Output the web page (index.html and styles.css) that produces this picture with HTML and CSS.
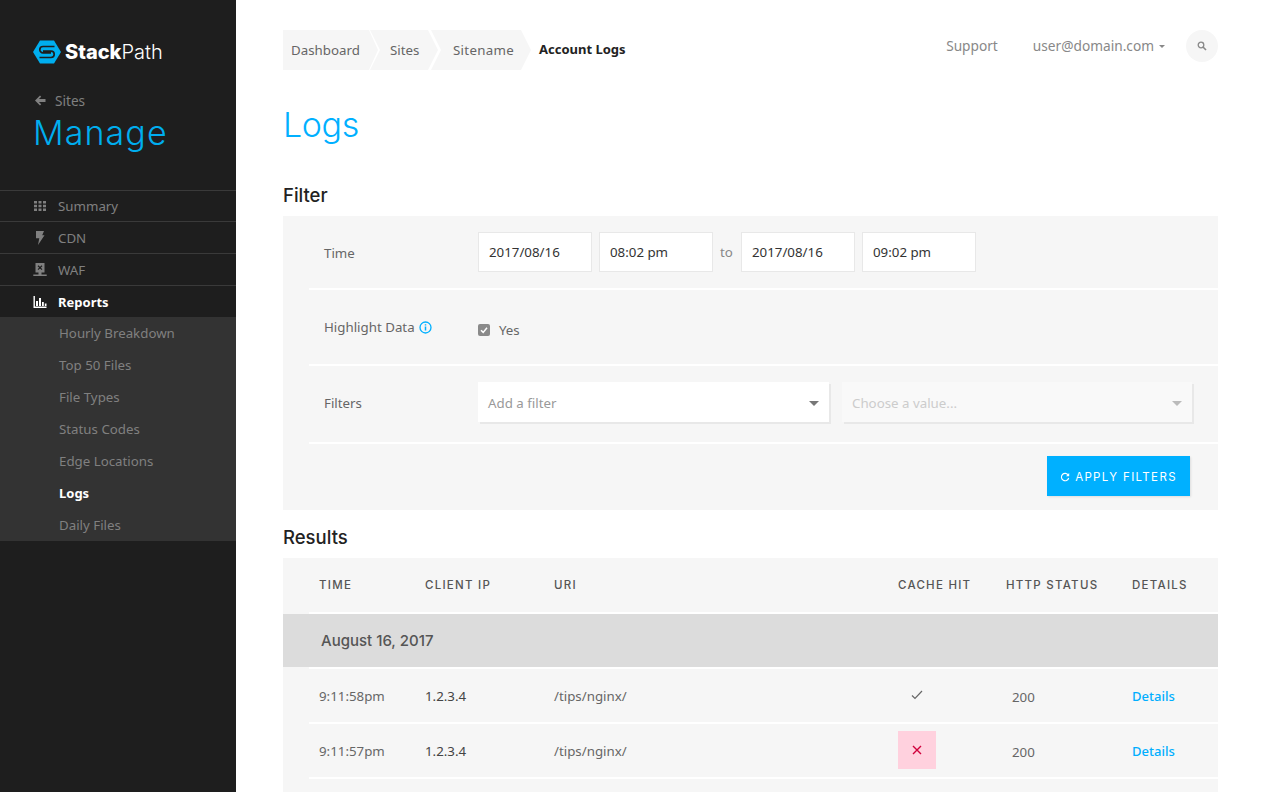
FILE: index.html
```html
<!DOCTYPE html>
<html lang="en">
<head>
<meta charset="utf-8">
<title>Logs</title>
<link rel="stylesheet" href="styles.css">
</head>
<body>
<div class="app">
  <aside class="sidebar">
    <div class="logo">
      <svg class="logo-mark" width="28" height="24" viewBox="0 0 28 24"><path d="M7 0.500H21L28 12L21 23.500H7L0 12Z" fill="#00aeef"/><path d="M21.500 6.500H10a3.200 3.200 0 0 0 0 6.400H18" fill="none" stroke="#1e1e1e" stroke-width="1.700"/><path d="M6.500 17.500H18a3.200 3.200 0 0 0 0-6.400H10" fill="none" stroke="#1e1e1e" stroke-width="1.700"/></svg>
      <span class="logo-text"><b>Stack</b>Path</span>
    </div>
    <a class="back"><svg width="12" height="11" viewBox="0 0 12 11"><path d="M6 0.500L1 5.500l5 5 1.200-1.200-2.300-2.300H11.500V4H4.900l2.300-2.300z" fill="#808080"/></svg><span>Sites</span></a>
    <h2 class="manage">Manage</h2>
    <nav class="nav">
      <a class="nav-item nav-first"><svg class="nav-icon" width="14" height="12" viewBox="0 0 14 12" fill="#808080"><path d="M1 1h3v2.600H1zM5.500 1h3v2.600h-3zM10 1h3v2.600h-3zM1 4.700h3v2.600H1zM5.500 4.700h3v2.600h-3zM10 4.700h3v2.600h-3zM1 8.400h3V11H1zM5.500 8.400h3V11h-3zM10 8.400h3V11h-3z"/></svg>Summary</a>
      <a class="nav-item"><svg class="nav-icon" width="14" height="14" viewBox="0 0 14 14" fill="#808080"><path d="M3 0h8L9.200 4.200h2.300L5 14l1.300-6.800H3z"/></svg>CDN</a>
      <a class="nav-item"><svg class="nav-icon" width="14" height="14" viewBox="0 0 14 14"><path d="M2.500 0h9v9.500h-3v2h5.200V13H.3v-1.500h5.200v-2h-3z" fill="#808080"/><path d="M5 2.800l4 3.800M9 2.800l-4 3.800" stroke="#1e1e1e" stroke-width="1.200"/></svg>WAF</a>
      <a class="nav-item nav-active"><svg class="nav-icon" width="14" height="12" viewBox="0 0 14 12" fill="#fff"><path d="M0.500 0h1.400v10.600H13.500V12H0.500zM3 5h2v5H3zM6 2h2v8H6zM9 6h1.800v4H9zM11.800 7.500h1.700V10h-1.700z"/></svg>Reports</a>
      <div class="subnav">
        <a class="sub-item">Hourly Breakdown</a>
        <a class="sub-item">Top 50 Files</a>
        <a class="sub-item">File Types</a>
        <a class="sub-item">Status Codes</a>
        <a class="sub-item">Edge Locations</a>
        <a class="sub-item sub-active">Logs</a>
        <a class="sub-item">Daily Files</a>
      </div>
    </nav>
  </aside>
  <main class="main">
    <header class="topbar">
      <div class="crumbs">
        <a class="crumb crumb-first">Dashboard</a>
        <a class="crumb crumb-sites">Sites</a>
        <a class="crumb crumb-site">Sitename</a>
        <span class="crumb-current">Account Logs</span>
      </div>
      <div class="top-right">
        <a class="top-link">Support</a>
        <a class="top-link user">user@domain.com<i class="caret-small"></i></a>
        <span class="search"><svg width="10" height="10" viewBox="0 0 10 10"><circle cx="4" cy="4" r="2.800" fill="none" stroke="#888" stroke-width="1.300"/><path d="M6 6l3 3" stroke="#888" stroke-width="1.600"/></svg></span>
      </div>
    </header>
    <h1 class="title">Logs</h1>
    <h3 class="section">Filter</h3>
    <section class="panel">
      <div class="row row-time">
        <div class="label">Time</div>
        <div class="controls">
          <span class="input">2017/08/16</span>
          <span class="input">08:02 pm</span>
          <span class="to">to</span>
          <span class="input">2017/08/16</span>
          <span class="input">09:02 pm</span>
        </div>
      </div>
      <div class="row row-highlight">
        <div class="label label-up">Highlight Data<svg class="info" width="13" height="13" viewBox="0 0 13 13"><circle cx="6.500" cy="6.500" r="5.500" fill="none" stroke="#00b0ff" stroke-width="1.300"/><path d="M6.500 5.500v4M6.500 3.200v1.300" stroke="#00b0ff" stroke-width="1.500"/></svg></div>
        <div class="controls check-wrap">
          <span class="checkbox"><svg width="12" height="12" viewBox="0 0 12 12"><path d="M3 6.200l2.200 2.200L9 3.800" fill="none" stroke="#fff" stroke-width="1.500"/></svg></span>
          <span class="check-label">Yes</span>
        </div>
      </div>
      <div class="row row-filters">
        <div class="label">Filters</div>
        <div class="controls selects">
          <span class="select">Add a filter<i class="caret"></i></span>
          <span class="select select-off">Choose a value...<i class="caret"></i></span>
        </div>
      </div>
      <div class="actions">
        <button class="apply"><svg width="10" height="10" viewBox="0 0 10 10"><path d="M8.300 3.200A3.700 3.700 0 1 0 8.700 6" fill="none" stroke="#fff" stroke-width="1.100"/><path d="M9.200 1v3.200H6z" fill="#fff"/></svg>APPLY FILTERS</button>
      </div>
    </section>
    <h3 class="section section-results">Results</h3>
    <section class="table">
      <div class="tgroup">
        <div class="thead grid">
          <span>TIME</span><span>CLIENT IP</span><span>URI</span><span>CACHE HIT</span><span>HTTP STATUS</span><span>DETAILS</span>
        </div>
      </div>
      <div class="date-row">August 16, 2017</div>
      <div class="tgroup tbody">
        <div class="trow grid">
          <span>9:11:58pm</span><span class="ip">1.2.3.4</span><span>/tips/nginx/</span>
          <span class="cache"><svg width="12" height="10" viewBox="0 0 12 10"><path d="M1 5.500l3 3L11 1" fill="none" stroke="#666" stroke-width="1.200"/></svg></span>
          <span class="status">200</span><a class="details">Details</a>
        </div>
        <div class="trow grid">
          <span>9:11:57pm</span><span class="ip">1.2.3.4</span><span>/tips/nginx/</span>
          <span class="cache"><span class="miss"><svg width="10" height="10" viewBox="0 0 10 10"><path d="M1 1l8 8M9 1l-8 8" stroke="#d0003c" stroke-width="1.400"/></svg></span></span>
          <span class="status">200</span><a class="details">Details</a>
        </div>
        <div class="trow grid"></div>
      </div>
    </section>
  </main>
</div>
</body>
</html>
```
FILE: styles.css
```css
* { box-sizing: border-box; }
html, body { margin: 0; height: 100%; overflow: hidden; }
body { font-family: "Noto Sans", "Open Sans", sans-serif; font-size: 13.300px; color: #666; background: #fff; }
.app { display: flex; height: 792px; overflow: hidden; }

.sidebar { width: 236px; flex: none; background: #1e1e1e; padding-top: 39px; }
.logo { display: flex; align-items: center; gap: 4px; padding-left: 33px; height: 26px; }
.logo-text { font-family: Inter, sans-serif; font-size: 20px; font-weight: 300; color: #fff; }
.logo-text b { font-weight: 800; }
.back { display: flex; align-items: center; gap: 9px; margin: 25px 0 0 34px; height: 20px; font-size: 13.600px; color: #808080; }
.manage { margin: 1px 0 0 33px; font-family: Inter, sans-serif; font-size: 34px; line-height: 44px; font-weight: 300; letter-spacing: 1.100px; color: #00aeef; }
.nav { margin-top: 35px; }
.nav-item { display: flex; align-items: center; height: 32px; padding-left: 33px; color: #808080; border-top: 1px solid #3a3a3a; }
.nav-first { height: 31px; }
.nav-icon { margin-right: 11px; flex: none; }
.nav-active { color: #fff; font-weight: 700; font-size: 13px; }
.subnav { background: #333; }
.sub-item { display: block; height: 32px; line-height: 32px; padding-left: 59px; color: #808080; }
.sub-active { color: #fff; font-weight: 700; font-size: 13px; }

.main { flex: 1; min-width: 0; padding: 30px 44px 0 47px; }
.topbar { display: flex; justify-content: space-between; height: 40px; }
.crumbs { display: flex; align-items: center; height: 40px; }
.crumb { display: block; height: 40px; line-height: 40px; background: #f6f6f6; color: #666; clip-path: polygon(0 0, calc(100% - 10px) 0, 100% 50%, calc(100% - 10px) 100%, 0 100%, 10px 50%); }
.crumb-first { width: 95px; padding-left: 8px; clip-path: polygon(0 0, calc(100% - 9px) 0, 100% 50%, calc(100% - 9px) 100%, 0 100%); }
.crumb-sites { width: 68px; margin-left: -8px; padding-left: 20px; }
.crumb-site { width: 100px; margin-left: -7px; padding-left: 22px; letter-spacing: 0.300px; }
.crumb-current { margin-left: 8px; font-weight: 700; font-size: 13px; line-height: 39px; height: 40px; color: #222; }
.top-right { display: flex; align-items: flex-start; font-size: 13.700px; color: #888; }
.top-link { line-height: 32px; color: #888; }
.user { margin-left: 35px; display: flex; align-items: center; }
.caret-small { margin-left: 5px; border: 3px solid transparent; border-top: 3px solid #888; border-bottom: 0; }
.search { margin-left: 21px; width: 32px; height: 32px; border-radius: 50%; background: #f6f6f6; display: flex; align-items: center; justify-content: center; }
.title { margin: 33px 0 0; font-family: Inter, sans-serif; font-size: 34px; line-height: 44px; font-weight: 300; letter-spacing: -0.400px; color: #00b0ff; }
.section { margin: 36px 0 0; font-family: Inter, sans-serif; font-size: 18.500px; line-height: 24px; font-weight: 500; color: #222; }
.panel { margin-top: 9px; background: #f6f6f6; height: 294px; padding-left: 26px; }
.row { display: flex; align-items: center; border-bottom: 2px solid #fff; }
.row-time { height: 74px; }
.row-highlight { height: 76px; }
.row-filters { height: 78px; padding-bottom: 4px; }
.label { width: 169px; padding: 2px 0 0 15px; color: #666; display: flex; align-items: center; }
.label-up { margin-bottom: 2px; }
.controls { display: flex; align-items: center; }
.input { width: 114px; height: 40px; margin-right: 7px; line-height: 38px; padding-left: 10px; background: #fff; border: 1px solid #e8e8e8; color: #333; }
.to { color: #888; width: 21px; }
.info { margin-left: 4px; }
.check-wrap { margin-top: 6px; }
.checkbox { width: 12px; height: 12px; border-radius: 2px; background: #8a8a8a; display: flex; }
.check-label { margin-left: 9px; }
.selects { gap: 13px; }
.select { position: relative; display: block; width: 351px; height: 40px; line-height: 42px; padding-left: 10px; background: #fff; color: #999; box-shadow: 2px 2px 0 #e8e8e8; }
.select-off { width: 350px; background: #f9f9f9; color: #ccc; }
.caret { position: absolute; right: 10px; top: 19px; border: 5px solid transparent; border-top: 5px solid #777; border-bottom: 0; }
.select-off .caret { border-top-color: #bbb; }
.actions { display: flex; justify-content: flex-end; padding: 12px 28px 0 0; }
.apply { display: flex; align-items: center; justify-content: center; gap: 5px; width: 143px; height: 40px; padding: 2px 0 0; border: 0; background: #00b0ff; color: #fff; font-family: Inter, sans-serif; font-size: 11.500px; letter-spacing: 1.350px; box-shadow: 1px 1px 2px #ddd; }
.section-results { margin-top: 15px; }
.table { margin-top: 9px; }
.tgroup { padding-left: 26px; background: #f6f6f6; }
.grid { display: grid; grid-template-columns: 106px 129px 344px 108px 126px 1fr; padding-left: 10px; align-items: center; }
.thead { height: 56px; border-bottom: 2px solid #fff; font-family: Inter, sans-serif; font-size: 11.500px; letter-spacing: 1.250px; font-weight: 500; color: #555; }
.date-row { height: 53px; background: #dcdcdc; padding-left: 38px; line-height: 53px; font-family: Inter, sans-serif; font-size: 15px; font-weight: 500; color: #555; }
.trow { height: 55px; border-bottom: 2px solid #fff; }
.trow:first-child { height: 57px; border-top: 2px solid #fff; }
.ip { color: #444; }
.cache { display: flex; width: 38px; height: 38px; margin-top: -2px; align-items: center; justify-content: center; }
.miss { display: flex; width: 38px; height: 38px; align-items: center; justify-content: center; background: #ffd1de; }
.status { padding: 2px 0 0 6px; }
.details { color: #00aeff; font-weight: 500; font-size: 13px; }
```
